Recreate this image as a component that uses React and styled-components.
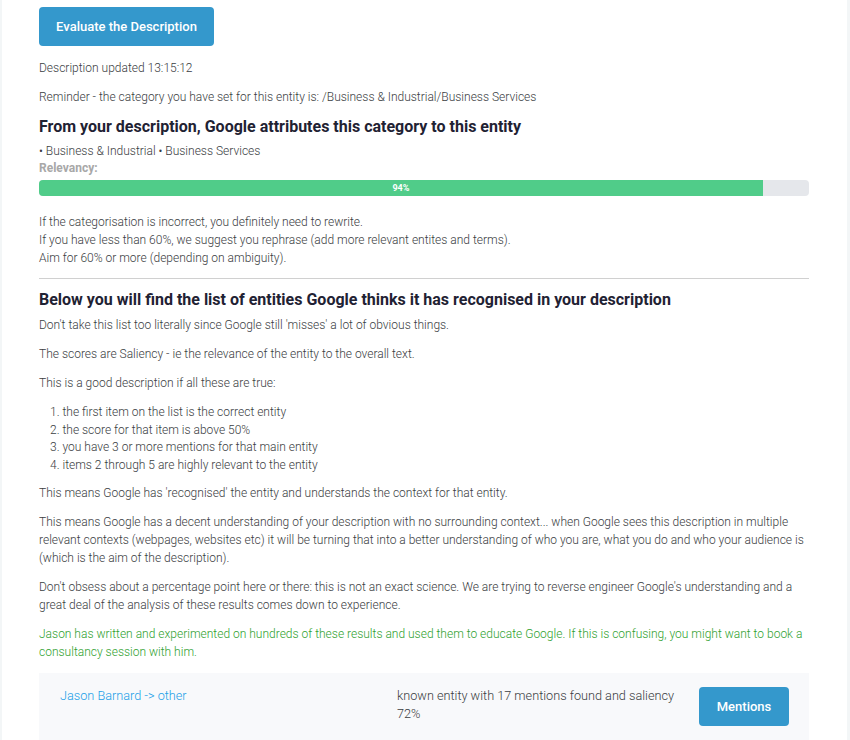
import React from "react";
import styled, { createGlobalStyle } from "styled-components";

const Global = createGlobalStyle`
  html, body { margin: 0; padding: 0; background: #f3f6f7; }
  body { font-family: Roboto, "Liberation Sans", Arial, sans-serif; }
  * { box-sizing: border-box; }
`;

const Page = styled.div`
  background: #ffffff;
  margin: 0 3px 0 2px;
  padding: 7px 38px 0 37px;
  min-height: 740px;
  color: #3a3d42;
  font-size: 12px;
  font-weight: 300;
`;

const PrimaryButton = styled.button`
  display: inline-flex;
  align-items: center;
  justify-content: center;
  height: ${(p) => p.$h || 39}px;
  width: ${(p) => p.$w}px;
  background: #3498cc;
  color: #fff;
  border: none;
  border-radius: 4px;
  font-family: Roboto, "Liberation Sans", Arial, sans-serif;
  font-size: 13px;
  font-weight: 500;
  cursor: pointer;
  padding: 0;
`;

const Para = styled.p`
  margin: 0 0 ${(p) => (p.$mb != null ? p.$mb : 11)}px;
  line-height: 18px;
  color: ${(p) => (p.$green ? "#2f9f2f" : "#3a3d42")};
`;

const Heading = styled.h2`
  margin: 0 0 ${(p) => p.$mb || 5}px;
  font-size: 16px;
  line-height: 20px;
  font-weight: 700;
  color: #1f2233;
`;

const Label = styled.div`
  font-weight: 700;
  color: #a8a8a8;
  line-height: 16px;
  margin-bottom: 4px;
`;

const Track = styled.div`
  height: 16px;
  background: #e5e7eb;
  border-radius: 4px;
  overflow: hidden;
  margin-bottom: 17px;
`;

const Fill = styled.div`
  height: 100%;
  background: #50cc89;
  color: #fff;
  font-size: 9px;
  font-weight: 700;
  display: flex;
  align-items: center;
  justify-content: center;
`;

const Rule = styled.hr`
  border: none;
  border-top: 1px solid #d0d0d0;
  margin: 11px 0 11px;
`;

const List = styled.ol`
  margin: 12px 0 10px;
  padding-left: 11px;
  list-style-position: inside;
  li { line-height: 17.5px; }
`;

const EntityRow = styled.div`
  display: grid;
  grid-template-columns: 1fr 286px 90px;
  column-gap: 16px;
  align-items: start;
  background: #f8f9fb;
  padding: 14px 20px 20px 21px;
  margin-top: 12px;
  font-size: 12.7px;
`;

const EntityLink = styled.a`
  color: #1a9fe8;
  text-decoration: none;
  line-height: 18px;
`;

const EntityInfo = styled.div`
  line-height: 18px;
  color: #3a3d42;
`;

export default function App() {
  return (
    <>
      <Global />
      <Page>
        <PrimaryButton $w={175} style={{ marginBottom: 13 }}>Evaluate the Description</PrimaryButton>
        <Para>Description updated 13:15:12</Para>
        <Para>Reminder - the category you have set for this entity is: /Business &amp; Industrial/Business Services</Para>
        <Heading $mb={5}>From your description, Google attributes this category to this entity</Heading>
        <Para $mb={0}>• Business &amp; Industrial • Business Services</Para>
        <Label>Relevancy:</Label>
        <Track>
          <Fill style={{ width: "94%" }}>94%</Fill>
        </Track>
        <Para $mb={0}>
          If the categorisation is incorrect, you definitely need to rewrite.
          <br />
          If you have less than 60%, we suggest you rephrase (add more relevant entites and terms).
          <br />
          Aim for 60% or more (depending on ambiguity).
        </Para>
        <Rule />
        <Heading $mb={6}>Below you will find the list of entities Google thinks it has recognised in your description</Heading>
        <Para>Don't take this list too literally since Google still 'misses' a lot of obvious things.</Para>
        <Para>The scores are Saliency - ie the relevance of the entity to the overall text.</Para>
        <Para $mb={0}>This is a good description if all these are true:</Para>
        <List>
          <li>the first item on the list is the correct entity</li>
          <li>the score for that item is above 50%</li>
          <li>you have 3 or more mentions for that main entity</li>
          <li>items 2 through 5 are highly relevant to the entity</li>
        </List>
        <Para>This means Google has 'recognised' the entity and understands the context for that entity.</Para>
        <Para>
          This means Google has a decent understanding of your description with no surrounding context... when Google sees this description in multiple relevant contexts (webpages, websites etc) it will be turning that into a better understanding of who you are, what you do and who your audience is (which is the aim of the description).
        </Para>
        <Para>
          Don't obsess about a percentage point here or there: this is not an exact science. We are trying to reverse engineer Google's understanding and a great deal of the analysis of these results comes down to experience.
        </Para>
        <Para $green $mb={0}>
          Jason has written and experimented on hundreds of these results and used them to educate Google. If this is confusing, you might want to book a consultancy session with him.
        </Para>
        <EntityRow>
          <EntityLink href="#">Jason Barnard -&gt; other</EntityLink>
          <EntityInfo>known entity with 17 mentions found and saliency 72%</EntityInfo>
          <PrimaryButton $w={90}>Mentions</PrimaryButton>
        </EntityRow>
      </Page>
    </>
  );
}
